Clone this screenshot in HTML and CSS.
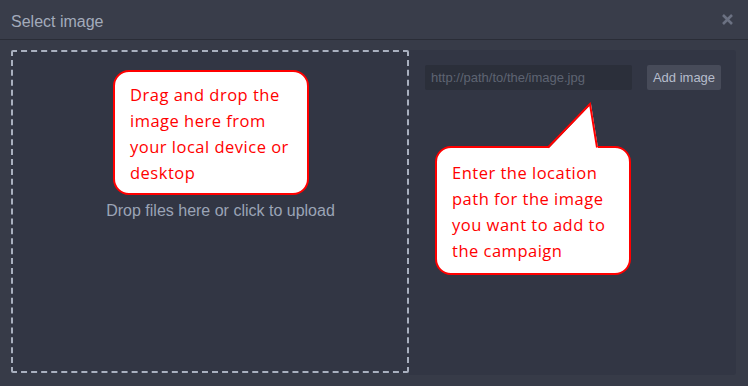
FILE: index.html
```html
<!DOCTYPE html>
<html>
<head>
<meta charset="utf-8">
<link rel="stylesheet" href="styles.css">
</head>
<body>
<div class="dialog">
  <div class="header">
    <div class="title">Select image</div>
    <svg class="close" width="11" height="11" viewBox="0 0 11 11"><path d="M1 1 L10 10 M10 1 L1 10" stroke="#6b7182" stroke-width="2.6" stroke-linecap="butt"/></svg>
  </div>
  <div class="main">
    <div class="dropzone">
      <div class="droptext">Drop files here or click to upload</div>
    </div>
    <div class="panel">
      <div class="row">
        <input class="url" type="text" placeholder="http://path/to/the/image.jpg">
        <button class="add">Add image</button>
      </div>
    </div>
  </div>
  <div class="callout c1">Drag and drop the image here from your local device or desktop</div>
  <div class="callout c2">Enter the location path for the image you want to add to the campaign
    <svg class="tail" width="60" height="48" viewBox="0 0 60 48"><polygon points="2,46 44,2 51,46 51,49 2,49" fill="#fff"/><polyline points="1,45.5 43,2 50,45.5" fill="none" stroke="#ff0000" stroke-width="2" stroke-linejoin="miter"/></svg>
  </div>
</div>
</body>
</html>
```
FILE: styles.css
```css
* { box-sizing: border-box; }
html, body { margin: 0; padding: 0; }
body {
  width: 748px;
  height: 386px;
  background: #373b48;
  font-family: "Liberation Sans", Arial, sans-serif;
  overflow: hidden;
}
.dialog { position: relative; width: 748px; height: 386px; }
.header {
  height: 40px;
  background: #393d4a;
  border-bottom: 1px solid #2a2d37;
  display: flex;
  justify-content: space-between;
  align-items: flex-start;
  padding: 13px 15px 0 11px;
}
.title {
  font-size: 16px;
  line-height: 18px;
  color: #a3abbb;
}
.close { margin-top: 1px; }
.main {
  display: flex;
  align-items: flex-start;
  padding: 10px 12px 11px 11px;
}
.dropzone {
  width: 398px;
  height: 323px;
  border: 2px dashed #a9b0bf;
  border-radius: 2px;
  background: #323644;
  padding-top: 150px;
  padding-left: 21px;
  text-align: center;
}
.droptext {
  font-size: 16px;
  line-height: 18px;
  color: #9ba4b6;
}
.panel {
  flex: 1;
  height: 325px;
  background: #323644;
  border-radius: 0 3px 3px 0;
  padding: 15px 15px 0 16px;
}
.row { display: flex; gap: 15px; }
.url {
  flex: 1;
  height: 25px;
  border: none;
  border-radius: 2px;
  background: #2b2f3a;
  padding: 0 6px;
  font-family: "Liberation Sans", Arial, sans-serif;
  font-size: 13px;
  color: #c0c6d2;
  outline: none;
}
.url::placeholder { color: #5e6472; }
.add {
  width: 74px;
  height: 25px;
  border: none;
  border-radius: 2px;
  background: #474b59;
  color: #b6bdcc;
  font-family: "Liberation Sans", Arial, sans-serif;
  font-size: 13px;
  padding: 0;
}
.callout {
  position: absolute;
  width: 196px;
  background: #fff;
  border: 2px solid #ff0000;
  border-radius: 16px;
  color: #ff0000;
  font-family: "Open Sans", sans-serif;
  font-size: 16.5px;
  letter-spacing: 0.5px;
  line-height: 26px;
  padding: 10px 8px 7px 15px;
}
.c1 { left: 113px; top: 70px; height: 125px; }
.c2 { left: 435px; top: 146px; height: 129px; padding-top: 12px; }
.tail { position: absolute; left: 110px; top: -46px; }
```
